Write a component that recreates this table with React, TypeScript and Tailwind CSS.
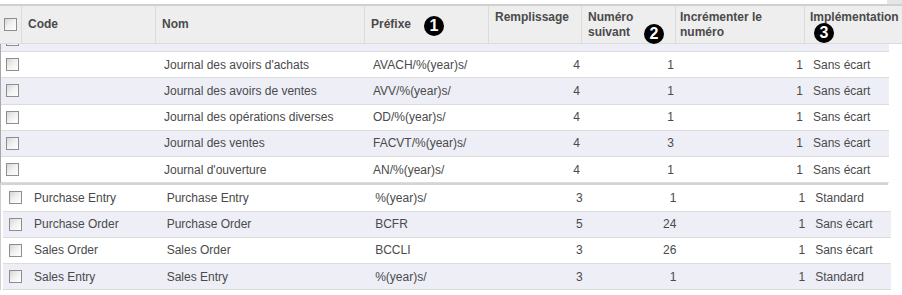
import React from "react";

type RowData = {
    code: string;
    nom: string;
    prefixe: string;
    rempl: number;
    suivant: number;
    incr: number;
    impl: string;
};

const topRows: RowData[] = [
    { code: "", nom: "Journal des avoirs d'achats", prefixe: "AVACH/%(year)s/", rempl: 4, suivant: 1, incr: 1, impl: "Sans écart" },
    { code: "", nom: "Journal des avoirs de ventes", prefixe: "AVV/%(year)s/", rempl: 4, suivant: 1, incr: 1, impl: "Sans écart" },
    { code: "", nom: "Journal des opérations diverses", prefixe: "OD/%(year)s/", rempl: 4, suivant: 1, incr: 1, impl: "Sans écart" },
    { code: "", nom: "Journal des ventes", prefixe: "FACVT/%(year)s/", rempl: 4, suivant: 3, incr: 1, impl: "Sans écart" },
    { code: "", nom: "Journal d'ouverture", prefixe: "AN/%(year)s/", rempl: 4, suivant: 1, incr: 1, impl: "Sans écart" },
];

const bottomRows: RowData[] = [
    { code: "Purchase Entry", nom: "Purchase Entry", prefixe: "%(year)s/", rempl: 3, suivant: 1, incr: 1, impl: "Standard" },
    { code: "Purchase Order", nom: "Purchase Order", prefixe: "BCFR", rempl: 5, suivant: 24, incr: 1, impl: "Sans écart" },
    { code: "Sales Order", nom: "Sales Order", prefixe: "BCCLI", rempl: 3, suivant: 26, incr: 1, impl: "Sans écart" },
    { code: "Sales Entry", nom: "Sales Entry", prefixe: "%(year)s/", rempl: 3, suivant: 1, incr: 1, impl: "Standard" },
];

const Checkbox = ({ className = "" }: { className?: string }) => (
    <span
        className={`block h-[13px] w-[13px] shrink-0 border border-[#8e8e8e] bg-gradient-to-br from-[#d6d6d6] via-[#f2f2f2] to-white ${className}`}
    />
);

const Badge = ({ n, className }: { n: string; className: string }) => (
    <span
        className={`absolute flex h-[20px] w-[20px] items-center justify-center rounded-full bg-black text-[16px] font-bold leading-none text-white ${className}`}
    >
        {n}
    </span>
);

const Row = ({ row, odd, shifted }: { row: RowData; odd: boolean; shifted?: boolean }) => (
    <div
        className={`flex h-[26.25px] items-center border-b border-[#dcdcdc] ${odd ? "bg-[#eeeef7]" : "bg-white"}`}
    >
        <div className={`flex ${shifted ? "w-[24px] pl-[6px]" : "w-[22px] pl-[5px]"}`}>
            <Checkbox />
        </div>
        <div className="w-[134px] truncate pl-[7px]">{row.code}</div>
        <div className={`w-[209px] truncate ${shifted ? "pl-[6px]" : "pl-[7px]"}`}>{row.nom}</div>
        <div className={`w-[124px] truncate ${shifted ? "pl-[6px]" : "pl-[7px]"}`}>{row.prefixe}</div>
        <div className="w-[93px] pr-[3px] text-right">{row.rempl}</div>
        <div className="w-[94px] pr-[3px] text-right">{row.suivant}</div>
        <div className="w-[129px] pr-[3px] text-right">{row.incr}</div>
        <div className="w-[83px] truncate pl-[7px]">{row.impl}</div>
    </div>
);

export default function App() {
    return (
        <div className="h-[295px] w-[902px] overflow-hidden bg-white font-['Liberation_Sans',Arial,sans-serif] text-[12px] text-[#4a4a4a]">
            {/* top strip */}
            <div className="flex h-[4px]">
                <div className="w-[887px] bg-white" />
                <div className="flex-1 bg-[#e6e6e6]" />
            </div>
            <div className="h-[2px] bg-[#d0d0d0]" />

            {/* header */}
            <div className="flex h-[38px] border-b border-[#dcdcdc] bg-[#eeeeee] font-bold leading-[15px] text-[#4a4a4a]">
                <div className="flex w-[22px] items-center border-r border-[#dcdcdc] pl-[4px]">
                    <Checkbox />
                </div>
                <div className="flex w-[134px] items-center border-r border-[#dcdcdc] pl-[6px]">Code</div>
                <div className="flex w-[209px] items-center border-r border-[#dcdcdc] pl-[6px]">Nom</div>
                <div className="relative flex w-[124px] items-center border-r border-[#dcdcdc] pl-[6px]">
                    Préfixe
                    <Badge n="1" className="left-[59px] top-[10px]" />
                </div>
                <div className="w-[93px] border-r border-[#dcdcdc] pl-[6px] pt-[4px]">Remplissage</div>
                <div className="relative w-[94px] border-r border-[#dcdcdc] pl-[6px] pt-[4px]">
                    Numéro
                    <br />
                    suivant
                    <Badge n="2" className="left-[62px] top-[18px]" />
                </div>
                <div className="w-[129px] border-r border-[#dcdcdc] pl-[4px] pt-[4px]">
                    Incrémenter le
                    <br />
                    numéro
                </div>
                <div className="relative flex-1 pl-[5px] pt-[4px]">
                    Implémentation
                    <Badge n="3" className="left-[9px] top-[17px]" />
                </div>
            </div>

            {/* top body */}
            <div className="w-[889px] border-l border-[#a8a8a8]">
                <div className="flex h-[8px] items-start overflow-hidden border-b border-[#dcdcdc] bg-[#eeeef7] pl-[5px]">
                    <Checkbox className="-mt-[11px]" />
                </div>
                {topRows.map((r, i) => (
                    <Row key={i} row={r} odd={i % 2 === 1} />
                ))}
            </div>
            <div className="h-[2px] w-[888px] bg-[#d4d4d4]" />

            {/* bottom body */}
            <div className="flex">
                <div className="w-[1px] bg-[#cfcfcf]" />
                <div className="w-[890px] pl-[2px]">
                    {bottomRows.map((r, i) => (
                        <Row key={i} row={r} odd={i % 2 === 1} shifted />
                    ))}
                </div>
            </div>
        </div>
    );
}
